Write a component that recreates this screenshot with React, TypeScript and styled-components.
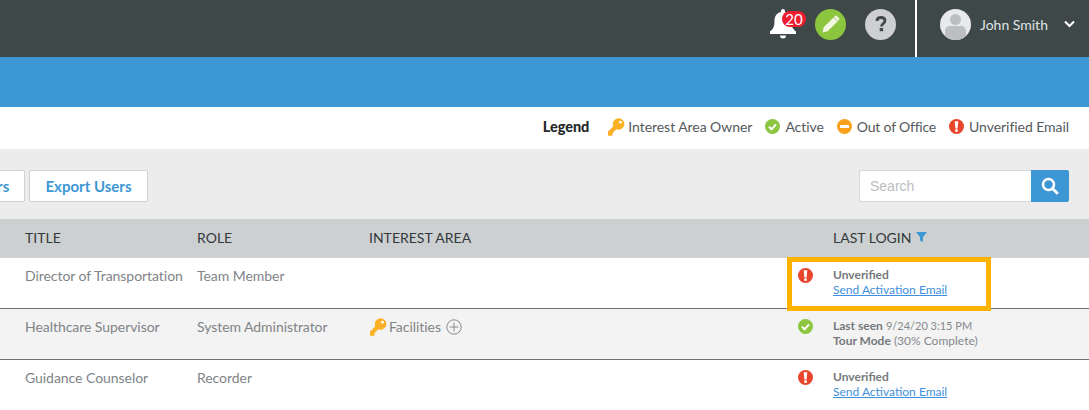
import React from 'react'
import styled, { createGlobalStyle } from 'styled-components'

const GlobalStyle = createGlobalStyle`
    html, body {
        margin: 0;
        padding: 0;
        background: #fff;
        font-family: Lato, "Open Sans", sans-serif;
    }
`

const Page = styled.div`
    width: 1089px;
    height: 410px;
    overflow: hidden;
    position: relative;
`

const TopBar = styled.div`
    height: 57px;
    background: #3f4849;
    display: flex;
    align-items: stretch;
    justify-content: flex-end;
`

const IconGroup = styled.div`
    display: flex;
    align-items: center;
    padding-bottom: 9px;
`

const BellWrap = styled.div`
    position: relative;
    width: 26px;
    height: 32px;
    margin-right: 19px;
`

const Badge = styled.span`
    position: absolute;
    top: 3px;
    left: 12px;
    width: 24px;
    height: 16px;
    border-radius: 8px;
    background: #ed1c2e;
    color: #fff;
    font-size: 15px;
    line-height: 16px;
    text-align: center;
`

const RoundIcon = styled.div<{ $bg: string; $gap: number }>`
    width: 31px;
    height: 31px;
    border-radius: 50%;
    background: ${p => p.$bg};
    margin-right: ${p => p.$gap}px;
    display: flex;
    align-items: center;
    justify-content: center;
`

const UserArea = styled.div`
    width: 174px;
    border-left: 2px solid #fff;
    box-sizing: border-box;
    display: flex;
    align-items: center;
    padding: 0 0 9px 23px;
    color: #dfe4e4;
    font-size: 14px;
`

const Avatar = styled.div`
    width: 31px;
    height: 31px;
    border-radius: 50%;
    background: #e8e9ea;
    overflow: hidden;
    margin-right: 9px;
    flex: none;
`

const UserName = styled.span`
    width: 84px;
    flex: none;
`

const BlueBar = styled.div`
    height: 50px;
    background: #3d97d4;
`

const LegendBar = styled.div`
    height: 42px;
    box-sizing: border-box;
    background: #fff;
    display: flex;
    align-items: center;
    justify-content: flex-end;
    padding: 0 20px 3px 0;
    font-size: 14px;
    letter-spacing: -0.05px;
    color: #54595c;
`

const LegendTitle = styled.strong`
    color: #25282a;
    font-size: 14.5px;
    font-weight: 900;
    margin-right: 18px;
`

const LegendItem = styled.span<{ $gap?: number; $tight?: boolean }>`
    display: flex;
    align-items: center;
    gap: ${p => p.$gap ?? 5}px;
    margin-right: 13px;
    letter-spacing: ${p => (p.$tight ? '-0.2px' : 'inherit')};
    &:last-child {
        margin-right: 0;
    }
`

const Toolbar = styled.div`
    height: 70px;
    box-sizing: border-box;
    background: #ececec;
    display: flex;
    align-items: center;
    justify-content: space-between;
    padding: 4px 20px 0 0;
`

const Buttons = styled.div`
    display: flex;
    gap: 4px;
    margin-left: -93px;
`

const ToolButton = styled.button<{ $width: number }>`
    width: ${p => p.$width}px;
    height: 32px;
    box-sizing: border-box;
    background: #fff;
    border: 1px solid #cfd2d3;
    border-radius: 2px;
    color: #3d97d4;
    font-family: inherit;
    font-size: 15px;
    font-weight: 700;
    padding: 0;
`

const SearchBox = styled.div`
    display: flex;
    height: 32px;
`

const SearchInput = styled.input`
    width: 172px;
    box-sizing: border-box;
    background: #fff;
    border: 1px solid #d5d7d8;
    border-right: 0;
    border-radius: 2px 0 0 2px;
    padding: 0 10px;
    font-family: "Liberation Sans", sans-serif;
    font-size: 14px;
    &::placeholder {
        color: #bcbec0;
        opacity: 1;
    }
`

const SearchButton = styled.button`
    width: 38px;
    border: 0;
    border-radius: 0 2px 2px 0;
    background: #3d97d4;
    padding: 0;
    display: flex;
    align-items: center;
    justify-content: center;
`

const Row = styled.div`
    display: grid;
    grid-template-columns: 172px 172px 429px 35px 1fr;
    padding-left: 25px;
    align-items: center;
`

const HeadRow = styled(Row)`
    height: 39px;
    box-sizing: border-box;
    padding-bottom: 3px;
    background: #ccd0d1;
    color: #33383b;
    font-size: 14px;
`

const LoginHead = styled.span`
    display: flex;
    align-items: center;
    gap: 5px;
`

const BodyRow = styled(Row)<{ $shaded?: boolean; $last?: boolean }>`
    height: ${p => (p.$last ? 50 : 51)}px;
    box-sizing: border-box;
    align-items: start;
    background: ${p => (p.$shaded ? '#f3f3f3' : '#fff')};
    border-bottom: ${p => (p.$last ? '0' : '1px solid #6f7172')};
    color: #808487;
    font-size: 14px;
    letter-spacing: -0.05px;
`

const Cell = styled.div`
    padding-top: 9px;
    line-height: 18px;
`

const InterestCell = styled(Cell)`
    display: flex;
    align-items: center;
    gap: 2px;
`

const StatusCell = styled.div`
    padding-top: 10px;
    display: flex;
`

const LoginCell = styled.div`
    padding-top: 9px;
    font-size: 12px;
    line-height: 15px;
    letter-spacing: 0;
    color: #85898c;
`

const Strong = styled.strong`
    font-weight: 700;
    color: #76797c;
`

const SeenDate = styled.span`
    font-size: 11px;
`

const MailLink = styled.a`
    color: #3f8fdc;
    text-decoration: underline;
`

const Highlight = styled.div`
    position: absolute;
    left: 787px;
    top: 257px;
    width: 204px;
    height: 54px;
    box-sizing: border-box;
    border: 5px solid #ffb300;
    pointer-events: none;
`

const KeyIcon = () => (
    <svg width="18" height="18" viewBox="0 0 18 18">
        <circle cx="11.6" cy="6" r="5.8" fill="#fbb025" />
        <path d="M8.5 9l-6 6.2" stroke="#fbb025" strokeWidth="4.2" fill="none" />
        <path d="M1 17.8V13l4 .6.6 4.2z" fill="#fbb025" />
        <circle cx="13.4" cy="4.2" r="1.4" fill="#fff" />
    </svg>
)

const CheckIcon = () => (
    <svg width="15" height="15" viewBox="0 0 15 15">
        <circle cx="7.5" cy="7.5" r="7.5" fill="#8cc63f" />
        <path d="M3.9 7.6l2.6 2.6 4.6-4.8" fill="none" stroke="#fff" strokeWidth="2" />
    </svg>
)

const OutIcon = () => (
    <svg width="15" height="15" viewBox="0 0 15 15">
        <circle cx="7.5" cy="7.5" r="7.5" fill="#f9a11b" />
        <rect x="3" y="6" width="9" height="3" rx="0.5" fill="#fff" />
    </svg>
)

const AlertIcon = () => (
    <svg width="15" height="15" viewBox="0 0 15 15">
        <circle cx="7.5" cy="7.5" r="7.5" fill="#e8452c" />
        <path d="M5.7 2.2h3.6l-.7 7.2H6.4z" fill="#fff" />
        <circle cx="7.5" cy="11.4" r="1.5" fill="#fff" />
    </svg>
)

const PlusCircle = () => (
    <svg width="16" height="16" viewBox="0 0 16 16" style={{ marginLeft: 3 }}>
        <circle cx="8" cy="8" r="7.2" fill="none" stroke="#85898c" strokeWidth="1" />
        <path d="M8 3.6v8.8M3.6 8h8.8" stroke="#85898c" strokeWidth="1" />
    </svg>
)

const App = () => (
    <Page>
        <GlobalStyle />
        <TopBar>
            <IconGroup>
                <BellWrap>
                    <svg width="26" height="32" viewBox="0 0 26 32">
                        <path
                            fill="#fff"
                            d="M13 1a2 2 0 0 1 2 2v1c4.2.8 6.5 4.3 6.5 9 0 5 1 8 4.5 10.5V26H0v-2.5C3.5 21 4.5 18 4.500 13c0-4.700 2.300-8.200 6.500-9V3a2 2 0 0 1 2-2z"
                        />
                        <path fill="#fff" d="M10 27.5h6a3 3 0 0 1-6 0z" />
                    </svg>
                    <Badge>20</Badge>
                </BellWrap>
                <RoundIcon $bg="#8cc63f" $gap={19}>
                    <svg width="20" height="20" viewBox="0 0 20 20">
                        <path fill="#f2f7e6" d="M1.5 18.5l1.2-5.2 9.9-9.9 4 4-9.900 9.900zM14 2a1.300 1.300 0 0 1 1.900 0l2.100 2.100a1.300 1.300 0 0 1 0 1.900l-1 1-4-4z" />
                    </svg>
                </RoundIcon>
                <RoundIcon $bg="#cdcfd0" $gap={19}>
                    <svg width="14" height="20" viewBox="0 0 14 20">
                        <path d="M3 7c0-2.300 1.700-3.500 4-3.500s4 1.300 4 3.200c0 2.800-3.500 2.800-3.500 5.800" fill="none" stroke="#44494b" strokeWidth="2.800" />
                        <rect x="5.700" y="14" width="3.400" height="3.200" rx="0.5" fill="#44494b" />
                    </svg>
                </RoundIcon>
            </IconGroup>
            <UserArea>
                <Avatar>
                    <svg width="31" height="31" viewBox="0 0 31 31">
                        <circle cx="15.5" cy="10.5" r="5.5" fill="#bcbec0" />
                        <path d="M5 31v-9a5 5 0 0 1 5-5h11a5 5 0 0 1 5 5v9z" fill="#bcbec0" />
                    </svg>
                </Avatar>
                <UserName>John Smith</UserName>
                <svg width="11" height="8" viewBox="0 0 11 8">
                    <path d="M1 1.5l4.500 4.500L10 1.500" fill="none" stroke="#fff" strokeWidth="2" />
                </svg>
            </UserArea>
        </TopBar>
        <BlueBar />
        <LegendBar>
            <LegendTitle>Legend</LegendTitle>
            <LegendItem $gap={3}><KeyIcon />Interest Area Owner</LegendItem>
            <LegendItem><CheckIcon />Active</LegendItem>
            <LegendItem $tight><OutIcon />Out of Office</LegendItem>
            <LegendItem><AlertIcon />Unverified Email</LegendItem>
        </LegendBar>
        <Toolbar>
            <Buttons>
                <ToolButton $width={118}>Import Users</ToolButton>
                <ToolButton $width={119}>Export Users</ToolButton>
            </Buttons>
            <SearchBox>
                <SearchInput placeholder="Search" />
                <SearchButton aria-label="Search">
                    <svg width="18" height="18" viewBox="0 0 18 18">
                        <circle cx="7.5" cy="7.5" r="5.5" fill="none" stroke="#fff" strokeWidth="2.6" />
                        <path d="M11.5 11.5l5.3 5.3" stroke="#fff" strokeWidth="2.8" />
                    </svg>
                </SearchButton>
            </SearchBox>
        </Toolbar>
        <HeadRow>
            <span>TITLE</span>
            <span>ROLE</span>
            <span>INTEREST AREA</span>
            <span />
            <LoginHead>
                LAST LOGIN
                <svg width="11" height="10" viewBox="0 0 11 10">
                    <path d="M0 0h11L7 5v5L4 8.5V5z" fill="#3d97d4" />
                </svg>
            </LoginHead>
        </HeadRow>
        <BodyRow>
            <Cell>Director of Transportation</Cell>
            <Cell>Team Member</Cell>
            <Cell />
            <StatusCell><AlertIcon /></StatusCell>
            <LoginCell>
                <Strong>Unverified</Strong>
                <br />
                <MailLink>Send Activation Email</MailLink>
            </LoginCell>
        </BodyRow>
        <BodyRow $shaded>
            <Cell>Healthcare Supervisor</Cell>
            <Cell>System Administrator</Cell>
            <InterestCell><KeyIcon />Facilities<PlusCircle /></InterestCell>
            <StatusCell><CheckIcon /></StatusCell>
            <LoginCell>
                <Strong>Last seen</Strong> <SeenDate>9/24/20 3:15 PM</SeenDate>
                <br />
                <Strong>Tour Mode</Strong> (30% Complete)
            </LoginCell>
        </BodyRow>
        <BodyRow $last>
            <Cell>Guidance Counselor</Cell>
            <Cell>Recorder</Cell>
            <Cell />
            <StatusCell><AlertIcon /></StatusCell>
            <LoginCell>
                <Strong>Unverified</Strong>
                <br />
                <MailLink>Send Activation Email</MailLink>
            </LoginCell>
        </BodyRow>
        <Highlight />
    </Page>
)

export default App
